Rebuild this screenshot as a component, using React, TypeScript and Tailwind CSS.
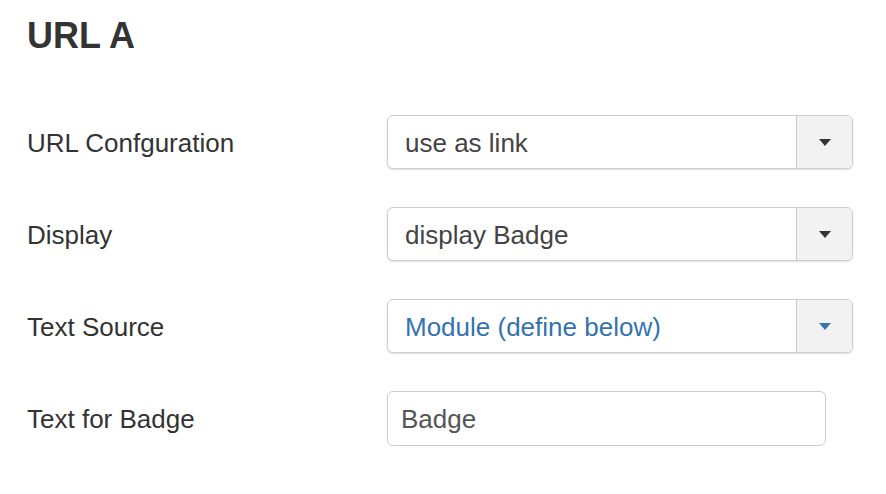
import React from 'react';

interface SelectRowProps {
  label: string;
  value: string;
  highlight?: boolean;
}

function Caret({ color }: { color: string }) {
  return (
    <svg width="12" height="7" viewBox="0 0 12 7">
      <path d="M0 0h12L6 7z" fill={color} />
    </svg>
  );
}

function Row({ label, children }: { label: string; children: React.ReactNode }) {
  return (
    <div className="flex items-center h-[54px]">
      <div className="w-[360px] pt-[3px] text-[26px] text-[#333]">{label}</div>
      {children}
    </div>
  );
}

function SelectRow({ label, value, highlight = false }: SelectRowProps) {
  return (
    <Row label={label}>
      <div className="flex h-[54px] w-[466px] rounded-[6px] border border-[#ccc] bg-white shadow-[0_1px_2px_rgba(0,0,0,0.12)] overflow-hidden">
        <div
          className={`flex-1 flex items-center pl-[17px] pt-[2px] text-[26px] ${
            highlight ? 'text-[#3572b0]' : 'text-[#444]'
          }`}
        >
          {value}
        </div>
        <div className="w-[56px] flex items-center justify-center border-l border-[#ccc] bg-[#f2f2f2]">
          <Caret color={highlight ? '#3572b0' : '#333'} />
        </div>
      </div>
    </Row>
  );
}

export default function App() {
  return (
    <div className="w-[886px] h-[494px] bg-white pl-[27px] pt-[16px] font-['Liberation_Sans',Arial,sans-serif]">
      <h2 className="text-[36px] leading-[40px] font-bold text-[#333]">URL A</h2>
      <div className="mt-[59px] flex flex-col gap-[38px]">
        <SelectRow label="URL Confguration" value="use as link" />
        <SelectRow label="Display" value="display Badge" />
        <SelectRow label="Text Source" value="Module (define below)" highlight />
        <Row label="Text for Badge">
          <div className="h-[55px] w-[439px] rounded-[6px] border border-[#ccc] bg-white flex items-center pl-[13px] pt-[2px] text-[26px] text-[#555]">
            Badge
          </div>
        </Row>
      </div>
    </div>
  );
}
